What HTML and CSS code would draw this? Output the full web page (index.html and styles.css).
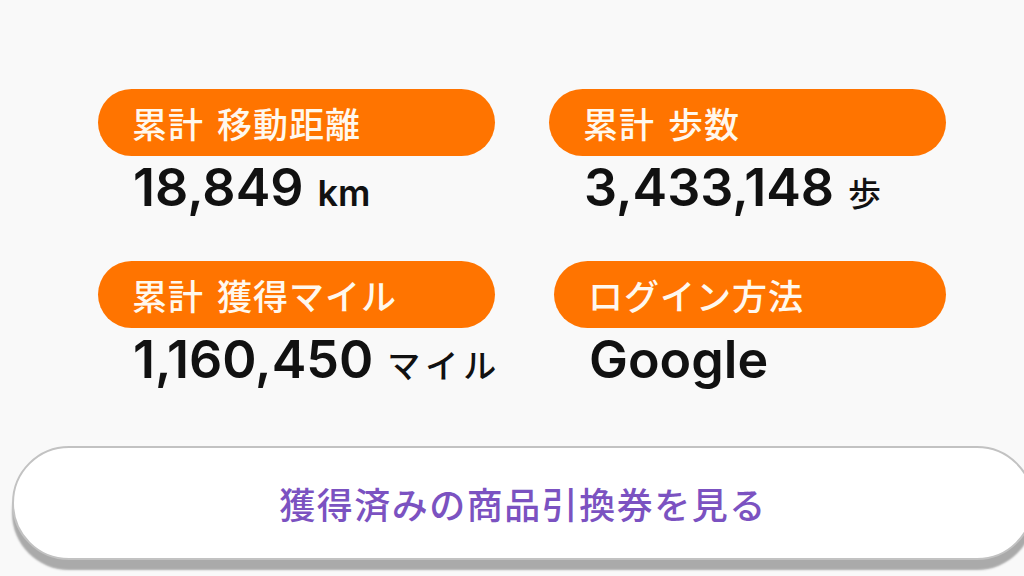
FILE: index.html
```html
<!DOCTYPE html>
<html lang="ja">
<head>
<meta charset="utf-8">
<link rel="stylesheet" href="styles.css">
</head>
<body>
<main class="page">
  <section class="stats">
    <div class="stat">
      <div class="pill">累計 移動距離</div>
      <div class="value">18,849<span class="unit unit-latin">km</span></div>
    </div>
    <div class="stat">
      <div class="pill">累計 歩数</div>
      <div class="value">3,433,148<span class="unit unit-cjk">歩</span></div>
    </div>
    <div class="stat">
      <div class="pill">累計 獲得マイル</div>
      <div class="value">1,160,450<span class="unit unit-cjk">マイル</span></div>
    </div>
    <div class="stat stat-shift">
      <div class="pill">ログイン方法</div>
      <div class="value">Google</div>
    </div>
  </section>
  <button class="voucher-btn" type="button">獲得済みの商品引換券を見る</button>
</main>
</body>
</html>
```
FILE: styles.css
```css
html, body {
  margin: 0;
  padding: 0;
}
body {
  width: 1024px;
  height: 576px;
  overflow: hidden;
  background: #f9f9f9;
  font-family: Inter, "Noto Sans CJK JP", sans-serif;
  color: #111;
}
.page {
  display: flex;
  flex-direction: column;
  padding-top: 89px;
}
.stats {
  display: grid;
  grid-template-columns: 397px 397px;
  column-gap: 54px;
  row-gap: 38px;
  padding-left: 98px;
}
.stat {
  display: flex;
  flex-direction: column;
}
.stat-shift {
  margin-left: 5px;
}
.pill {
  height: 67px;
  border-radius: 34px;
  background: #ff7400;
  color: #fff8ee;
  display: flex;
  align-items: center;
  padding-left: 34px;
  font-family: "Noto Sans CJK JP", sans-serif;
  font-weight: 500;
  font-size: 35px;
  letter-spacing: 1px;
  word-spacing: 4px;
}
.value {
  margin-top: 2px;
  padding-left: 35px;
  font-family: Inter, "Noto Sans CJK JP", sans-serif;
  font-weight: 600;
  font-size: 52px;
  line-height: 60px;
  white-space: nowrap;
}
.unit {
  margin-left: 14px;
  font-weight: 600;
}
.unit-latin {
  font-size: 36px;
}
.unit-cjk {
  font-family: "Noto Sans CJK JP", sans-serif;
  font-size: 33px;
  font-weight: 500;
  letter-spacing: 5px;
}
.voucher-btn {
  margin-top: 52px;
  margin-left: 12px;
  width: 1022px;
  height: 114px;
  flex: none;
  box-sizing: border-box;
  background: #ffffff;
  border: 2px solid #c2c2c2;
  border-radius: 57px;
  box-shadow: 0 10px 2px #aaaaaa;
  color: #7b52c1;
  font-family: "Noto Sans CJK JP", sans-serif;
  font-weight: 500;
  font-size: 36px;
  letter-spacing: 1.5px;
  padding: 0;
  text-align: center;
}
```
